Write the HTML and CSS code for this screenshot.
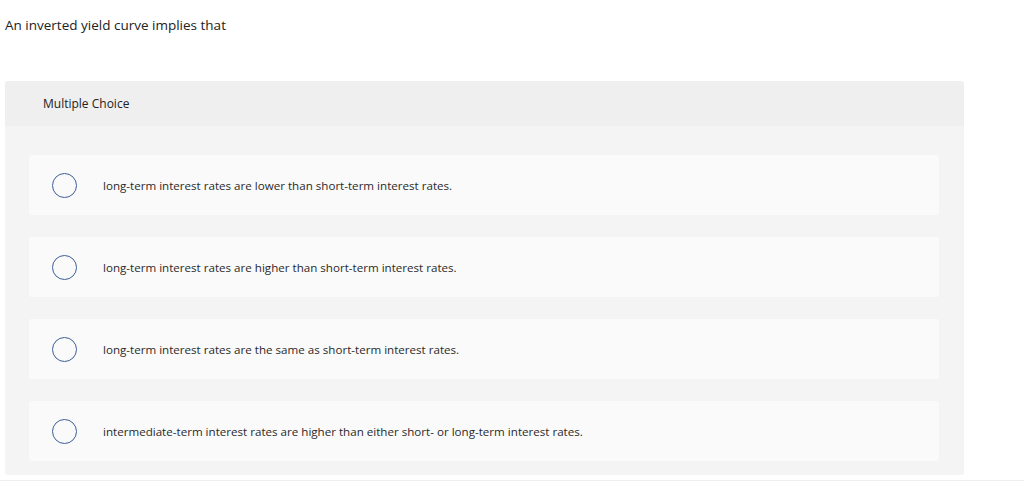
FILE: index.html
```html
<!DOCTYPE html>
<html lang="en">

<head>
    <meta charset="UTF-8">
    <meta name="viewport" content="width=device-width, initial-scale=1.0">
    <title>Multiple Choice</title>
    <link rel="stylesheet" href="styles.css">
</head>

<body>
    <div class="prompt">An inverted yield curve implies that</div>

    <div class="panel">
        <div class="panel-head">Multiple Choice</div>

        <div class="choices">
            <label class="choice">
                <span class="radio"></span>
                <span class="choice-text">long-term interest rates are lower than short-term interest rates.</span>
            </label>
            <label class="choice">
                <span class="radio"></span>
                <span class="choice-text">long-term interest rates are higher than short-term interest rates.</span>
            </label>
            <label class="choice">
                <span class="radio"></span>
                <span class="choice-text">long-term interest rates are the same as short-term interest rates.</span>
            </label>
            <label class="choice">
                <span class="radio"></span>
                <span class="choice-text">intermediate-term interest rates are higher than either short- or long-term interest rates.</span>
            </label>
        </div>
    </div>

    <div class="rule"></div>
</body>

</html>
```

FILE: styles.css
```css
body {
    margin: 0;
    padding: 0 5px;
    font-family: "Open Sans", "Liberation Sans", sans-serif;
    color: #222;
    background-color: #fff;
}

.prompt {
    font-size: 13.5px;
    padding-top: 16px;
    height: 81px;
    box-sizing: border-box;
}

.panel {
    width: 959px;
    background-color: #f4f4f4;
    border-radius: 3px;
}

.panel-head {
    background-color: #efefef;
    height: 45px;
    line-height: 45px;
    padding-left: 38px;
    font-size: 12px;
    border-radius: 3px 3px 0 0;
}

.choices {
    display: flex;
    flex-direction: column;
    gap: 22px;
    padding: 29px 25px 14px 24px;
}

.choice {
    display: flex;
    align-items: center;
    height: 60px;
    background-color: #fafafa;
    border-radius: 3px;
}

.radio {
    width: 23px;
    height: 23px;
    border: 1.3px solid #3c5f96;
    border-radius: 50%;
    margin-left: 23px;
    margin-right: 26px;
    flex-shrink: 0;
}

.choice-text {
    font-size: 11.6px;
    color: #2a2a2a;
}

.rule {
    height: 1px;
    background-color: #eee;
    margin: 5px -5px 0;
}
```
